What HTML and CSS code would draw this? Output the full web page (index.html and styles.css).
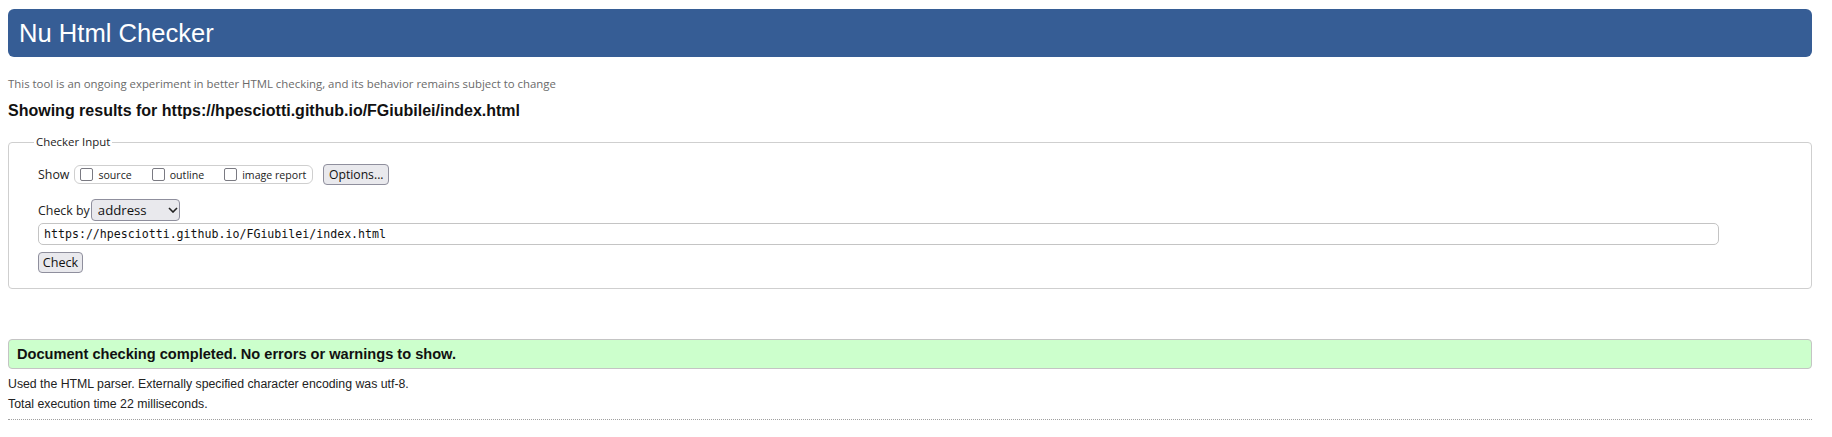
FILE: index.html
```html
<!DOCTYPE html>
<html lang="en">
<head>
<meta charset="utf-8">
<title>Showing results for https://hpesciotti.github.io/FGiubilei/index.html - Nu Html Checker</title>
<link rel="stylesheet" href="styles.css">
</head>
<body>
<header class="masthead"><h1 class="title">Nu Html Checker</h1></header>
<p class="tagline">This tool is an ongoing experiment in better HTML checking, and its behavior remains subject to change</p>
<h2 class="results-for">Showing results for https://hpesciotti.github.io/FGiubilei/index.html</h2>
<form class="checker">
  <fieldset class="checker-input">
    <legend class="legend">Checker Input</legend>
    <div class="row show-row">
      <span class="label">Show</span>
      <span class="show-opts">
        <label class="opt"><span class="cb"></span>source</label>
        <label class="opt"><span class="cb"></span>outline</label>
        <label class="opt"><span class="cb"></span>image report</label>
      </span>
      <span class="btn btn-options">Options...</span>
    </div>
    <div class="row checkby-row">
      <span class="label">Check by</span>
      <span class="select">address<svg class="chev" width="10" height="6" viewBox="0 0 10 6"><path d="M1 1 L5 5 L9 1" fill="none" stroke="#222" stroke-width="1.6"/></svg></span>
    </div>
    <div class="url">https://hpesciotti.github.io/FGiubilei/index.html</div>
    <div class="row"><span class="btn btn-check">Check</span></div>
  </fieldset>
</form>
<p class="success">Document checking completed. No errors or warnings to show.</p>
<p class="details">Used the HTML parser. Externally specified character encoding was utf-8.</p>
<p class="details">Total execution time 22 milliseconds.</p>
<div class="dotted"></div>
</body>
</html>
```
FILE: styles.css
```css
html, body { background: #fff; }
body {
  margin: 0;
  padding: 9px 20px 0 8px;
  font-family: "Liberation Sans", Arial, sans-serif;
  color: #111;
}
.masthead {
  background: #365d95;
  border-radius: 6px;
  height: 48px;
}
.title {
  margin: 0;
  padding-left: 11px;
  font-weight: normal;
  font-size: 25.6px;
  line-height: 48px;
  color: #fff;
}
.tagline {
  margin: 19px 0 0 0;
  font-family: "Open Sans", sans-serif;
  font-size: 11.4px;
  line-height: 16px;
  color: #6a6a6a;
}
.results-for {
  margin: 9px 0 0 0;
  font-size: 16px;
  line-height: 20px;
  font-weight: bold;
  color: #111;
}
.checker { margin: 0; }
.checker-input {
  margin: 13px 0 0 0;
  border: 1px solid #cfcfcf;
  border-radius: 4px;
  padding: 14px 0 15px 29px;
  font-family: "Open Sans", sans-serif;
  font-size: 11.6px;
  color: #222;
}
.legend {
  margin-left: -4px;
  padding: 0 2px;
  line-height: 16px;
  font-size: 11.4px;
  color: #222;
}
.row {
  display: flex;
  align-items: center;
}
.show-row { height: 21px; }
.label { margin-right: 5px; font-size: 12.4px; }
.show-opts {
  display: flex;
  align-items: center;
  height: 17px;
  border: 1px solid #cfcfcf;
  border-radius: 6px;
  padding: 0 6px 0 5px;
}
.opt {
  display: flex;
  align-items: center;
  font-size: 10.6px;
  margin-right: 20px;
}
.opt:last-child { margin-right: 0; }
.cb {
  display: inline-block;
  box-sizing: border-box;
  width: 13px;
  height: 13px;
  border: 1.5px solid #7a7a82;
  border-radius: 2px;
  background: #fff;
  margin-right: 5px;
}
.btn {
  display: inline-flex;
  align-items: center;
  justify-content: center;
  box-sizing: border-box;
  background: #e9e9ed;
  border: 1px solid #8f8f9d;
  border-radius: 4px;
  color: #111;
}
.btn-options {
  margin-left: 10px;
  width: 66px;
  height: 21px;
  font-size: 12.2px;
}
.checkby-row { margin-top: 14px; height: 22px; }
.checkby-row .label { margin-right: 1px; }
.select {
  display: inline-flex;
  align-items: center;
  box-sizing: border-box;
  width: 89px;
  height: 22px;
  padding-left: 6px;
  background: #e9e9ed;
  border: 1px solid #8f8f9d;
  border-radius: 4px;
  font-size: 13.2px;
  color: #111;
}
.chev { margin-left: 21px; }
.url {
  box-sizing: border-box;
  margin-top: 2px;
  width: 1681px;
  height: 22px;
  border: 1px solid #c4c4c4;
  border-radius: 5px;
  padding-left: 5px;
  font-family: "DejaVu Sans Mono", "Liberation Mono", monospace;
  font-size: 11.6px;
  line-height: 20px;
  color: #111;
}
.btn-check {
  margin-top: 7px;
  width: 45px;
  height: 21px;
  font-size: 12.6px;
}
.success {
  margin: 50px 0 0 0;
  box-sizing: border-box;
  height: 30px;
  background: #ccffcc;
  border: 1px solid #c4c4c4;
  border-radius: 4px;
  padding-left: 8px;
  font-size: 14.6px;
  font-weight: bold;
  line-height: 28px;
  color: #111;
}
.details {
  margin: 0;
  font-size: 12.3px;
  line-height: 20px;
  color: #222;
}
.success + .details { margin-top: 5px; }
.dotted {
  margin-top: 5px;
  border-top: 1px dotted #a0a0a0;
}
```
